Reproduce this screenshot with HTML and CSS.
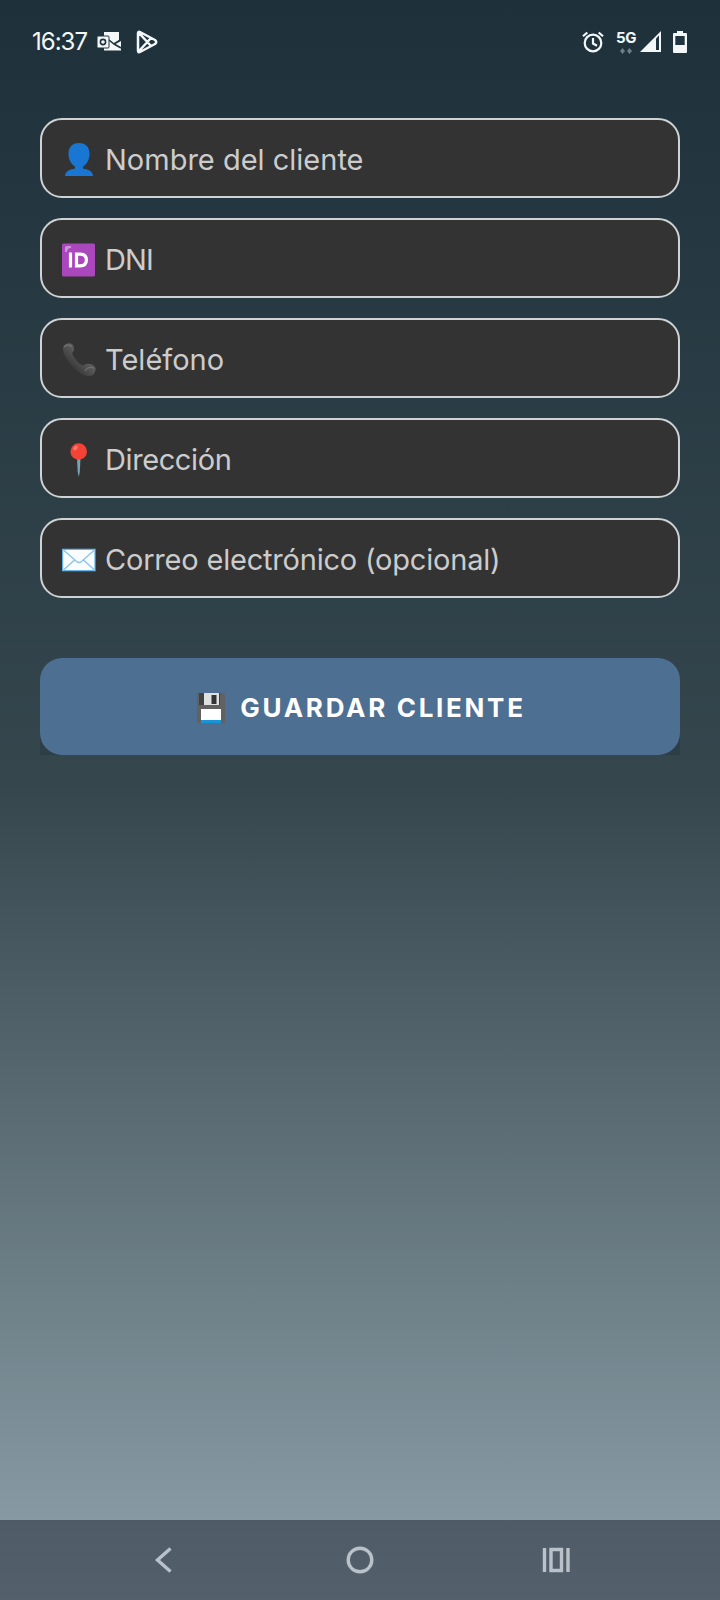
FILE: index.html
```html
<!DOCTYPE html>
<html lang="es">

<head>
  <meta charset="UTF-8" />
  <meta name="viewport" content="width=device-width, initial-scale=1.0" />
  <title>Nuevo cliente</title>
  <link rel="stylesheet" href="styles.css">
</head>

<body>
  <div class="screen">
    <!-- Status bar -->
    <header class="status-bar">
      <span class="clock">16:37</span>
      <svg class="icon-mail" width="24" height="20" viewBox="0 0 24 20">
        <path d="M7 0h15v8l-6 3.500L24 8v10.500H7z" fill="#f3f7f8" />
        <path d="M12 8l5 4 7-4M17 12l7 4" fill="none" stroke="#1f343e" stroke-width="1.600" />
        <rect x="0" y="4" width="12" height="12" rx="1" fill="#f3f7f8" stroke="#1f343e" stroke-width="1" />
        <circle cx="6" cy="10" r="2.600" fill="none" stroke="#1f343e" stroke-width="1.600" />
      </svg>
      <svg class="icon-play" width="24" height="26" viewBox="0 0 24 26">
        <path d="M3 4.500Q3 2 5 3L20 11Q22.500 13 20 15L5 23Q3 24 3 21.500z M4 4l12 13 M4 22L16 9" fill="none" stroke="#f3f7f8" stroke-width="2.500" stroke-linejoin="round" />
      </svg>
      <div class="status-right">
        <svg width="22" height="22" viewBox="0 0 22 22" fill="none" stroke="#f3f7f8" stroke-width="2.200">
          <circle cx="11" cy="12" r="8.300" />
          <path d="M11 7v5.500l4 2.300M1 5.300L5.300 1.500M21 5.300L16.700 1.500" />
        </svg>
        <div class="network">
          <span>5G</span>
          <svg width="12" height="6" viewBox="0 0 12 6" fill="#6f7f87">
            <path d="M2.500 0L5 3 2.500 6 0 3zM9.500 0L12 3 9.500 6 7 3z" />
          </svg>
        </div>
        <svg class="icon-signal" width="21" height="21" viewBox="0 0 21 21">
          <path d="M21 0v21H0z" fill="#f3f7f8" />
          <path d="M16 7.500L19 4.500V19h-3z" fill="#1f343e" />
        </svg>
        <svg class="icon-battery" width="14" height="22" viewBox="0 0 14 22">
          <path d="M4 0h6v2h3q1 0 1 1v18q0 1-1 1H1q-1 0-1-1V3q0-1 1-1h3z" fill="#f3f7f8" />
          <path d="M2.300 5h9.400v9H2.300z" fill="#1f343e" />
        </svg>
      </div>
    </header>

    <!-- Client form -->
    <main class="form">
      <div class="field name">
        <svg width="34" height="34" viewBox="0 0 34 34" fill="#1976d2">
          <path d="M17 0c7 0 10.500 4 10.500 11 0 6-3 10.500-6.500 12.500v2c4 1 10 2 10 7.500H3c0-5.500 6-6.500 10-7.500v-2C9.500 21.500 6.500 17 6.500 11 6.500 4 10 0 17 0z" />
        </svg>
        <span>Nombre del cliente</span>
      </div>
      <div class="field dni">
        <svg width="34" height="34" viewBox="0 0 34 34">
          <rect x="0" y="0.500" width="33" height="33" rx="1.500" fill="#ab47bc" />
          <path d="M3 9V5q0-2 2-2h4v2Q5 5 5 9z" fill="#ce93d8" />
          <path d="M8.500 9.500v15M14.500 11.200v11.600h3.400q6.500 0 6.500-5.800t-6.500-5.800z" fill="none" stroke="#fff" stroke-width="3.200" />
        </svg>
        <span>DNI</span>
      </div>
      <div class="field phone">
        <svg width="34" height="34" viewBox="0 0 34 34">
          <defs>
            <linearGradient id="handset" x1="0" y1="1" x2="1" y2="0">
              <stop offset="0.300" stop-color="#3c3c3c" />
              <stop offset="0.600" stop-color="#5c5c5c" />
            </linearGradient>
          </defs>
          <path d="M1 4C2 1 7-1 10 1c2 2 3 6 1 8-1.500 1-.5 3 1.500 6 3 4 5 6 7.500 7 2 1 2-.5 4-1 3-1 7 0 9 3 1.500 2 0 6-2 8-5 3-12 0-19-7C4 17 0 10 1 4z" fill="url(#handset)" />
          <path d="M2 4q4-4 8 0M23 28q3-5 9-3" fill="none" stroke="#707070" stroke-width="1.200" />
        </svg>
        <span>Teléfono</span>
      </div>
      <div class="field address">
        <svg width="34" height="34" viewBox="0 0 34 34">
          <path d="M15 15h3.500l-.7 14-1.100 5-1-5z" fill="#78a3b5" />
          <circle cx="16.700" cy="8.500" r="8.300" fill="#f44336" />
          <ellipse cx="13.500" cy="5" rx="2.800" ry="1.800" transform="rotate(-40 13.500 5)" fill="#ff7364" />
        </svg>
        <span>Dirección</span>
      </div>
      <div class="field email">
        <svg width="34" height="34" viewBox="0 0 34 34">
          <rect x="0.600" y="6.300" width="32.400" height="21.400" fill="#fafdff" stroke="#5fb2e6" stroke-width="1.200" />
          <path d="M1 27.500l12-11M33 27.500l-12-11M1 6.500l13.500 12q2.500 2 5 0L33 6.500" fill="none" stroke="#8cc4e8" stroke-width="1.400" />
        </svg>
        <span>Correo electrónico (opcional)</span>
      </div>

      <div class="save-wrap">
        <button class="save">
          <svg width="30" height="32" viewBox="0 0 30 32">
            <path d="M1 1h26l2 2v28H1z" fill="#616161" />
            <path d="M3 1h21v12H3z" fill="#424242" />
            <path d="M8 1h15v12H8z" fill="#e0e0e0" />
            <path d="M15.500 3h5v9h-5z" fill="#333" />
            <path d="M5 17h20v11H5z" fill="#fff" />
            <path d="M5 28h20v3H5z" fill="#1994d6" />
          </svg>
          <span>GUARDAR CLIENTE</span>
        </button>
      </div>
    </main>

    <!-- Navigation bar -->
    <nav class="nav-bar">
      <svg width="30" height="30" viewBox="0 0 30 30">
        <path d="M21.500 3.500L8.500 15l13 11.500" />
      </svg>
      <svg width="30" height="30" viewBox="0 0 30 30">
        <circle cx="15" cy="15" r="11.800" />
      </svg>
      <svg width="30" height="30" viewBox="0 0 30 30">
        <path d="M3.500 3v24M27 3v24M10 4.500h10.500v21H10z" />
      </svg>
    </nav>
  </div>
</body>

</html>
```
FILE: styles.css
```css
body {
  margin: 0;
  font-family: Inter, "Open Sans", sans-serif;
}

.screen {
  height: 1600px;
  display: flex;
  flex-direction: column;
  background: linear-gradient(#1e313b 0, #35464d 785px, #8799a2 1520px);
}

.status-bar {
  height: 83px;
  padding: 0 33px 0 32px;
  display: flex;
  align-items: center;
  color: #f3f7f8;
}

.clock {
  width: 56px;
  font-size: 24px;
  letter-spacing: -1px;
  white-space: nowrap;
}

.icon-mail {
  margin-left: 9px;
}

.icon-play {
  margin-left: 14px;
}

.status-right {
  display: flex;
  align-items: center;
  margin-left: auto;
}

.network {
  width: 20px;
  margin: 0 4px 0 12px;
  display: flex;
  flex-direction: column;
  align-items: center;
  gap: 3px;
  font-size: 15px;
  font-weight: 700;
  letter-spacing: -0.5px;
  line-height: 15px;
}

.icon-battery {
  margin-left: 12px;
}

.form {
  flex: 1;
  padding: 35px 40px 0;
  display: flex;
  flex-direction: column;
  gap: 20px;
}

.field {
  height: 80px;
  box-sizing: border-box;
  padding: 3px 20px 0;
  display: flex;
  align-items: center;
  gap: 9px;
  border: 2px solid #cfd3d4;
  border-radius: 22px;
  background: #333;
  color: #ccc;
  font-size: 29px;
  white-space: nowrap;
}

.dni {
  letter-spacing: -0.9px;
}

.address {
  letter-spacing: -0.4px;
}

.email {
  letter-spacing: -0.2px;
}

.save-wrap {
  margin-top: 40px;
  border-radius: 22px 22px 0 0;
  background: #2e3e46;
}

.save {
  width: 100%;
  height: 97px;
  padding: 2px 0 0 2px;
  display: flex;
  align-items: center;
  justify-content: center;
  gap: 14px;
  border: 0;
  border-radius: 22px;
  background: #4d6f92;
  color: #fff;
  font-family: inherit;
  font-size: 26px;
  font-weight: 700;
  letter-spacing: 2.7px;
}

.nav-bar {
  height: 80px;
  padding: 0 149px;
  display: flex;
  align-items: center;
  justify-content: space-between;
  background: linear-gradient(#4f5b66, #53606b);
}

.nav-bar svg {
  fill: none;
  stroke: #b9c2ca;
  stroke-width: 3.4;
}
```
